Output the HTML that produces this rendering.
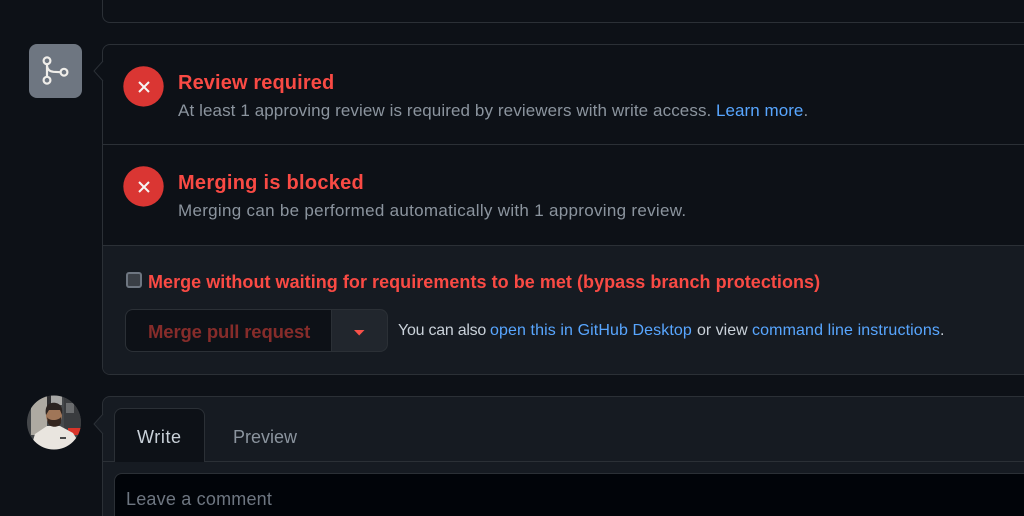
<!DOCTYPE html>
<html><head><meta charset="utf-8"><style>
html,body{margin:0;padding:0;width:1024px;height:516px;overflow:hidden;background:#0d1117;font-family:"Liberation Sans",sans-serif}
#w{position:relative;width:1024px;height:516px;overflow:hidden;background:#0d1117}
.a{position:absolute}
.t{position:absolute;white-space:nowrap;line-height:24px}
a{color:#58a6ff;text-decoration:none}
.box{position:absolute;box-sizing:border-box;border:1px solid #2b3036}
</style></head><body><div id="w">
<div class="box" style="left:102px;top:0;width:922px;height:23px;border-radius:0 0 0 8px;border-top:0;border-right:0"></div>

<div class="a" style="left:29px;top:44px;width:53px;height:54px;background:#6e7681;border-radius:8px"></div>
<svg class="a" style="left:38px;top:53px" width="34" height="36" viewBox="0 0 34 36" fill="none" stroke="#f0eeea" stroke-width="2.2">
<circle cx="9" cy="7.8" r="3.4"/><circle cx="9" cy="27.2" r="3.4"/><circle cx="26" cy="19.2" r="3.4"/>
<path d="M9 11.2V23.8M9 13C9.5 16.5 12 18.5 15.5 18.8L22.6 19.2"/></svg>

<div class="box" style="left:102px;top:44px;width:922px;height:331px;border-radius:8px 0 0 8px;border-right:0;background:#0d1117"></div>
<div class="a" style="left:103px;top:246px;width:921px;height:128px;background:#161b22;border-radius:0 0 0 7px"></div>
<div class="a" style="left:103px;top:144px;width:921px;height:1px;background:#2b3036"></div>
<div class="a" style="left:103px;top:245px;width:921px;height:1px;background:#2b3036"></div>
<svg class="a" style="left:92px;top:60px" width="12" height="22"><path d="M11 1L2 11L11 21" fill="#0d1117" stroke="#2b3036"/></svg>

<svg class="a" style="left:123px;top:66px" width="42" height="42"><circle cx="20.5" cy="20.4" r="20.2" fill="#da3633"/><path d="M16 16L26 26M26 16L16 26" stroke="#f5f5f5" stroke-width="2"/></svg>
<div class="t" style="left:178px;top:71px;font-size:20px;font-weight:700;color:#f94a44;letter-spacing:.12px">Review required</div>
<div class="t" style="left:178px;top:99px;font-size:17px;color:#8b949e;letter-spacing:.1px">At least 1 approving review is required by reviewers with write access.</div>
<div class="t" style="left:716px;top:99px;font-size:17px;color:#8b949e;letter-spacing:.05px"><a href="#">Learn more</a>.</div>

<svg class="a" style="left:123px;top:166px" width="42" height="42"><circle cx="20.5" cy="20.4" r="20.2" fill="#da3633"/><path d="M16 16L26 26M26 16L16 26" stroke="#f5f5f5" stroke-width="2"/></svg>
<div class="t" style="left:178px;top:171px;font-size:20px;font-weight:700;color:#f94a44;letter-spacing:.27px">Merging is blocked</div>
<div class="t" style="left:178px;top:199px;font-size:17px;color:#8b949e;letter-spacing:.3px">Merging can be performed automatically with 1 approving review.</div>

<div class="a" style="left:126px;top:272px;width:12px;height:12px;background:#3a3f46;border:2px solid #6e7681;border-radius:3px"></div>
<div class="t" style="left:148px;top:270px;font-size:18px;font-weight:700;color:#f94a44;letter-spacing:.04px">Merge without waiting for requirements to be met (bypass branch protections)</div>

<div class="box" style="left:125px;top:309px;width:207px;height:43px;border-radius:8px 0 0 8px;border-right:0;background:#0d1117"></div>
<div class="box" style="left:331px;top:309px;width:57px;height:43px;border-radius:0 8px 8px 0;background:#21262d"></div>
<div class="t" style="left:148px;top:320px;font-size:18.5px;font-weight:700;color:#862c2a;letter-spacing:-.13px">Merge pull request</div>
<svg class="a" style="left:354px;top:330px" width="11" height="6"><path d="M0 0H10.5L5.2 5.5Z" fill="#f85149"/></svg>
<div class="t" style="left:398px;top:319px;font-size:16px;color:#c9d1d9;letter-spacing:-.25px">You can also</div>
<div class="t" style="left:490px;top:319px;font-size:16px;letter-spacing:.1px"><a href="#">open this in GitHub Desktop</a></div>
<div class="t" style="left:697px;top:319px;font-size:16px;color:#c9d1d9">or view</div>
<div class="t" style="left:752px;top:319px;font-size:16px;color:#c9d1d9;letter-spacing:.12px"><a href="#">command line instructions</a>.</div>

<svg class="a" style="left:26px;top:395px" width="56" height="56" viewBox="0 0 56 56">
<defs><clipPath id="c"><circle cx="28" cy="27.5" r="27"/></clipPath></defs>
<g clip-path="url(#c)">
<rect width="56" height="56" fill="#45484b"/>
<rect x="5" y="0" width="16" height="40" fill="#aeaaa2"/>
<rect x="21" y="0" width="4" height="14" fill="#2e2e30"/>
<rect x="25" y="0" width="11" height="10" fill="#a8a8a6"/>
<rect x="38" y="0" width="18" height="34" fill="#3a3c3f"/>
<rect x="40" y="8" width="8" height="10" fill="#6a6c6e"/>
<rect x="42" y="33" width="14" height="7" fill="#d8352a"/>
<path d="M5 52L9 39L21 31H34L47 38L52 46L44 56H12Z" fill="#e9e5df"/>
<ellipse cx="28" cy="20" rx="8" ry="10.5" fill="#a07658"/>
<path d="M20 20C18 9 25 7 30 8C35 9 37 13 36 20L34 15H23Z" fill="#2b2320"/>
<path d="M21 22C23 26 32 26 35 22V28C33 33 24 33 22 28Z" fill="#35261f"/>
<rect x="34" y="42" width="6" height="2" fill="#4a4a4a"/>
</g></svg>

<div class="box" style="left:102px;top:396px;width:922px;height:120px;border-radius:8px 0 0 0;border-right:0;border-bottom:0;background:#161b22"></div>
<svg class="a" style="left:92px;top:413px" width="12" height="22"><path d="M11 1L2 11L11 21" fill="#161b22" stroke="#2b3036"/></svg>
<div class="a" style="left:103px;top:461px;width:921px;height:1px;background:#2b3036"></div>
<div class="a" style="left:114px;top:408px;width:91px;height:54px;box-sizing:border-box;border:1px solid #2b3036;border-bottom:0;border-radius:8px 8px 0 0;background:#0d1117"></div>
<div class="t" style="left:137px;top:425px;font-size:18px;color:#c9d1d9;letter-spacing:.6px">Write</div>
<div class="t" style="left:233px;top:425px;font-size:18px;color:#8b949e">Preview</div>
<div class="box" style="left:114px;top:473px;width:910px;height:43px;border-radius:8px 0 0 0;border-right:0;border-bottom:0;background:#010409"></div>
<div class="t" style="left:126px;top:487px;font-size:18px;color:#6e7681;letter-spacing:.2px">Leave a comment</div>
</div></body></html>
